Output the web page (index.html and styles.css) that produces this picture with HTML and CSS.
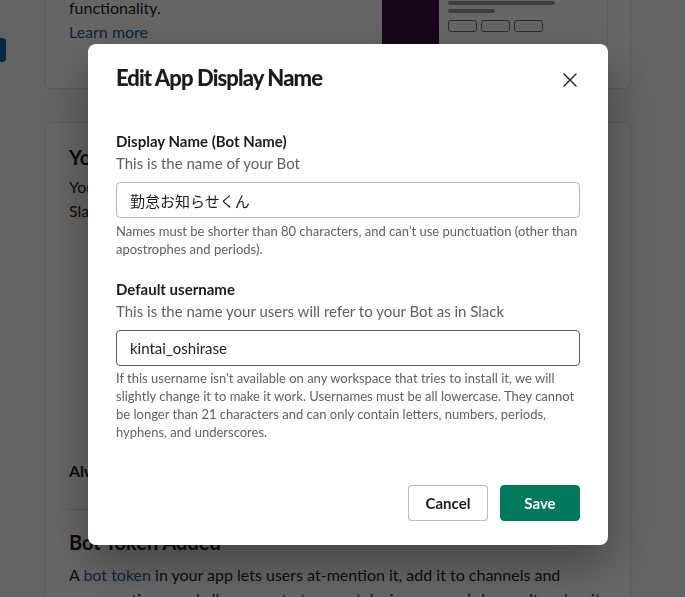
FILE: index.html
```html
<!DOCTYPE html>
<html lang="en">
<head>
<meta charset="utf-8">
<title>Edit App Display Name</title>
<link rel="stylesheet" href="styles.css">
</head>
<body>
<div class="page">
  <aside class="sidebar"><div class="nav-tab"></div></aside>
  <main class="main">
    <section class="card card-first">
      <div class="card-row">
        <div class="card-text">
          <p class="para">functionality.</p>
          <a class="link">Learn more</a>
        </div>
        <div class="preview">
          <div class="preview-dark"></div>
          <div class="preview-light">
            <div class="preview-col">
              <div class="pline pline-long"></div>
              <div class="pline pline-short"></div>
              <div class="pbtns"><span class="pbtn"></span><span class="pbtn"></span><span class="pbtn"></span></div>
            </div>
            <div class="pbox"></div>
          </div>
        </div>
      </div>
    </section>
    <section class="card card-second">
      <h2 class="card-title">Your App&rsquo;s Presence in Slack</h2>
      <p class="para">Your app will appear in conversations and search results in<br>Slack with this name.</p>
      <div class="spacer"></div>
      <p class="always">Always Show My Bot as Online</p>
      <hr class="divider">
      <h2 class="card-title">Bot Token Added</h2>
      <p class="para para-wide">A <a class="link">bot token</a> in your app lets users at-mention it, add it to channels and conversations, and allows you to turn on tabs in your app&rsquo;s home. It makes it possible for users to interact with your app in Slack.</p>
    </section>
  </main>
</div>

<div class="overlay">
  <div class="modal" role="dialog">
    <div class="modal-header">
      <h1 class="modal-title">Edit App Display Name</h1>
      <button class="close-btn" aria-label="Close">
        <svg width="14" height="14" viewBox="0 0 14 14"><path d="M1 1L13 13M13 1L1 13" stroke="#1d1c1d" stroke-width="1.4" stroke-linecap="round" fill="none"/></svg>
      </button>
    </div>
    <div class="modal-body">
      <div class="field">
        <label class="field-label">Display Name (Bot Name)</label>
        <div class="field-desc">This is the name of your Bot</div>
        <div class="input">勤怠お知らせくん</div>
        <div class="hint">Names must be shorter than 80 characters, and can&rsquo;t use punctuation (other than apostrophes and periods).</div>
      </div>
      <div class="field field-second">
        <label class="field-label">Default username</label>
        <div class="field-desc">This is the name your users will refer to your Bot as in Slack</div>
        <div class="input input-hover">kintai_oshirase</div>
        <div class="hint">If this username isn't available on any workspace that tries to install it, we will slightly change it to make it work. Usernames must be all lowercase. They cannot be longer than 21 characters and can only contain letters, numbers, periods, hyphens, and underscores.</div>
      </div>
    </div>
    <div class="modal-footer">
      <button class="btn btn-cancel">Cancel</button>
      <button class="btn btn-save">Save</button>
    </div>
  </div>
</div>
</body>
</html>
```

FILE: styles.css
```css
* { box-sizing: border-box; }

html, body {
  margin: 0;
  padding: 0;
  height: 100%;
  overflow: hidden;
}

body {
  font-family: Lato, "Noto Sans CJK JP", "Liberation Sans", sans-serif;
  background: #f8f8f8;
  color: #1d1c1d;
}

/* ---------- background page ---------- */
.page {
  display: flex;
  margin-top: -62px;
}

.sidebar {
  width: 45px;
  flex: none;
}

.nav-tab {
  margin-top: 100px;
  width: 6px;
  height: 24px;
  background: #1264a3;
  border-radius: 0 4px 4px 0;
}

.main {
  width: 586px;
  display: flex;
  flex-direction: column;
  gap: 33px;
}

.card {
  background: #fff;
  border: 1px solid #e2e2e2;
  border-radius: 6px;
  padding: 0 23px;
}

.card-first { height: 151px; }

.card-row {
  display: flex;
  justify-content: space-between;
}

.card-text { padding-top: 57px; }

.para {
  margin: 0;
  font-size: 16px;
  line-height: 24px;
}

.link {
  color: #1264a3;
  font-size: 16px;
  line-height: 24px;
  text-decoration: none;
}

.preview {
  display: flex;
  margin-right: -1px;
  height: 150px;
}

.preview-dark {
  width: 57px;
  background: #3f0e40;
}

.preview-light {
  width: 169px;
  background: #fff;
  display: flex;
  padding: 62px 10px 0 9px;
  gap: 15px;
  border-right: 1px solid #eee;
}

.preview-col { width: 108px; }

.pline {
  height: 4px;
  background: #9a9a9a;
  border-radius: 2px;
}
.pline-long { width: 107px; }
.pline-short { width: 47px; margin-top: 4px; }

.pbtns {
  display: flex;
  gap: 4px;
  margin-top: 7px;
}
.pbtn {
  width: 29px;
  height: 12px;
  border: 1px solid #6c6c6c;
  border-radius: 3px;
}

.pbox {
  width: 28px;
  height: 24px;
  margin-top: 62px;
  background: #f2f2f2;
}

.card-second { padding-top: 20px; }

.card-title {
  margin: 0;
  font-size: 20px;
  line-height: 28px;
  font-weight: 700;
}

.card-second .para { margin-top: 4px; }

.spacer { height: 236px; }

.always {
  margin: 0;
  font-size: 16px;
  font-weight: 700;
  line-height: 24px;
}

.divider {
  border: 0;
  border-top: 1px solid #ddd;
  margin: 26px 0 18px;
}

.card-second .para-wide { margin-top: 7px; }

/* ---------- overlay + modal ---------- */
.overlay {
  position: fixed;
  inset: 0;
  background: rgba(0, 0, 0, 0.6);
  display: flex;
  justify-content: center;
  align-items: flex-start;
  padding: 44px 0 0 11px;
}

.modal {
  width: 520px;
  background: #fff;
  border-radius: 8px;
  box-shadow: 0 18px 48px rgba(0, 0, 0, 0.35);
  padding: 0 28px 24px;
}

.modal-header {
  display: flex;
  align-items: center;
  justify-content: space-between;
  padding-top: 18px;
}

.modal-title {
  margin: 0;
  font-size: 22px;
  line-height: 32px;
  font-weight: 900;
  letter-spacing: -0.9px;
  color: #1d1c1d;
}

.close-btn {
  border: 0;
  background: none;
  padding: 0;
  width: 20px;
  height: 20px;
  display: flex;
  align-items: center;
  justify-content: center;
  margin-top: 4px;
}

.modal-body { padding-top: 36px; }

.field-label {
  display: block;
  font-size: 15px;
  line-height: 22px;
  font-weight: 700;
}

.field-desc {
  font-size: 15px;
  line-height: 22px;
  color: #616061;
}

.input {
  margin-top: 8px;
  height: 36px;
  border: 1px solid rgba(29, 28, 29, 0.3);
  border-radius: 4px;
  padding: 0 13px;
  display: flex;
  align-items: center;
  font-size: 15px;
  color: #1d1c1d;
}

.input-hover { border-color: rgba(29, 28, 29, 0.7); }

.hint {
  margin-top: 4px;
  font-size: 13px;
  line-height: 18px;
  color: #616061;
}

.field-second { margin-top: 20px; }

.field-second .hint { margin-top: 3px; }

.modal-footer {
  display: flex;
  justify-content: flex-end;
  gap: 12px;
  margin-top: 44px;
}

.btn {
  font-family: Lato, "Liberation Sans", sans-serif;
  font-size: 15px;
  font-weight: 700;
  height: 36px;
  width: 80px;
  border-radius: 4px;
  padding: 0;
}

.btn-cancel {
  background: #fff;
  border: 1px solid rgba(29, 28, 29, 0.3);
  color: #1d1c1d;
}

.btn-save {
  background: #007a5a;
  border: 1px solid #007a5a;
  color: #fff;
}
```
